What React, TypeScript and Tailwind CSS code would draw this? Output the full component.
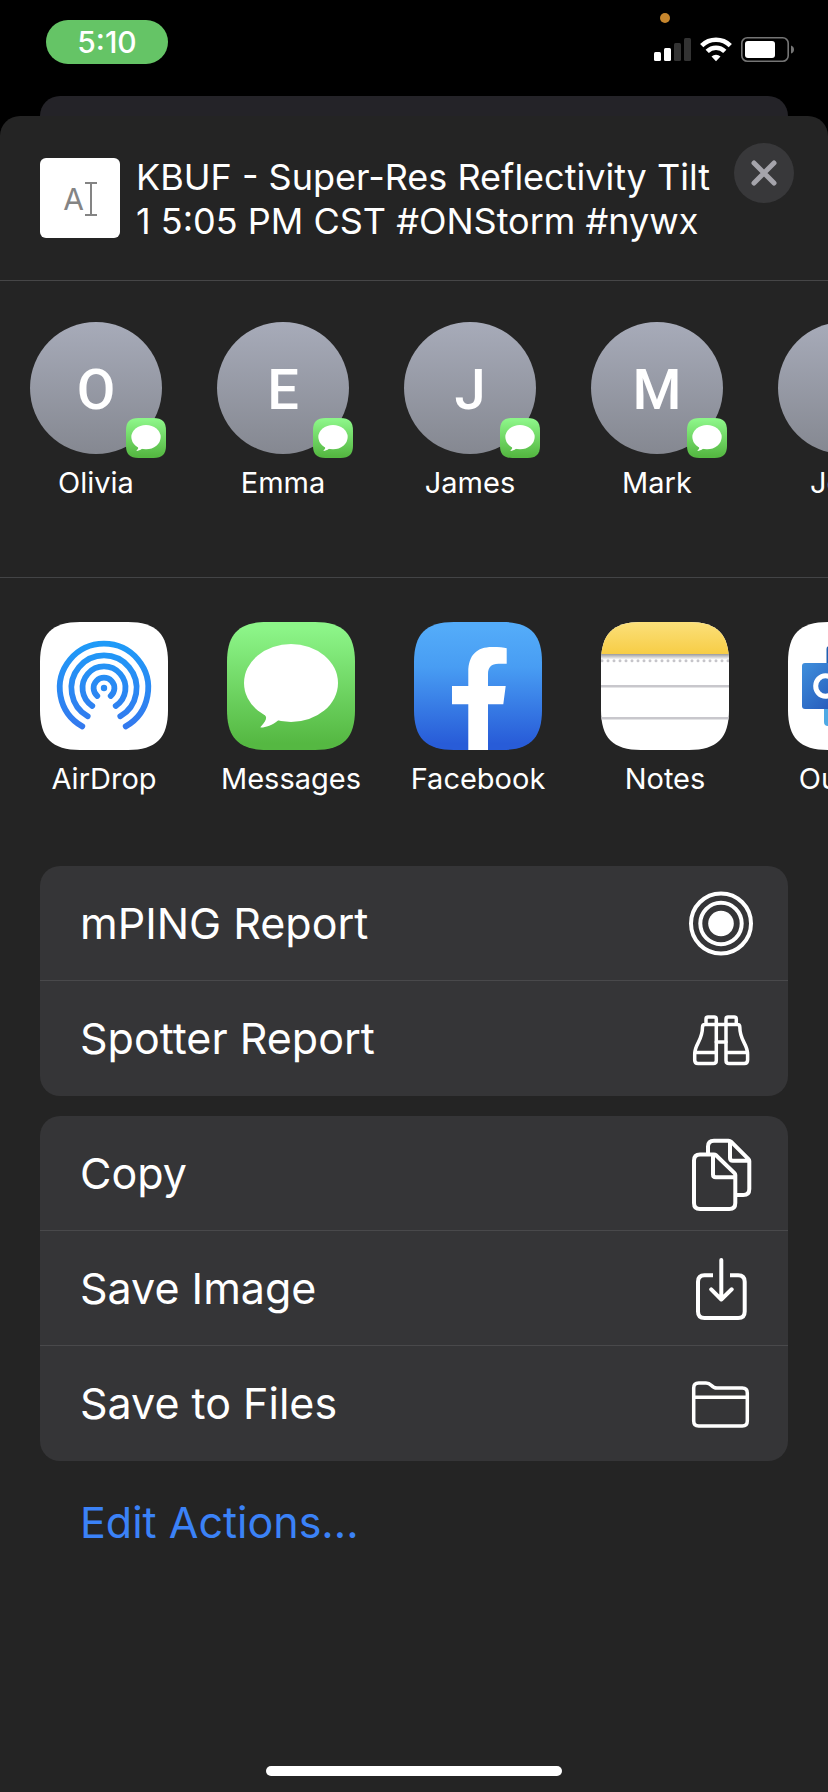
import React, { useId } from "react";

const TILE =
  "M0 40C0 12 12 0 40 0H88C116 0 128 12 128 40V88C128 116 116 128 88 128H40C12 128 0 116 0 88Z";

function MessagesIcon({ className }: { className: string }) {
  const id = useId();
  return (
    <svg viewBox="0 0 128 128" className={className} aria-hidden="true">
      <defs>
        <linearGradient id={id} x1="0" y1="0" x2="0" y2="1">
          <stop offset="0.05" stopColor="#8cf588" />
          <stop offset="0.95" stopColor="#55b842" />
        </linearGradient>
      </defs>
      <path d={TILE} fill={`url(#${id})`} />
      <ellipse cx="64" cy="61" rx="47" ry="39" fill="#fff" />
      <path d="M32 88C41 94 41.500 96 33.500 105C33 107 45 104 51 98.500L60 92Z" fill="#fff" />
    </svg>
  );
}

function AirDropIcon() {
  return (
    <svg viewBox="0 0 128 128" className="size-32" aria-hidden="true">
      <defs>
        <linearGradient id="airdrop" gradientUnits="userSpaceOnUse" x1="0" y1="20" x2="0" y2="108">
          <stop offset="0" stopColor="#1e9bf8" />
          <stop offset="1" stopColor="#3478ee" />
        </linearGradient>
      </defs>
      <path d={TILE} fill="#fff" />
      <g fill="none" stroke="url(#airdrop)" strokeWidth="5.8" strokeLinecap="round">
        <path d="M42.300 104.400A44.200 44.200 0 1 1 85.700 104.400" />
        <path d="M47.700 94.300A32.600 32.600 0 1 1 80.300 94.300" />
        <path d="M52.300 84A21.500 21.500 0 1 1 75.700 84" />
        <path d="M57.300 74A10.400 10.400 0 1 1 70.700 74" />
      </g>
      <circle cx="64" cy="66" r="3.200" fill="#2a8af3" />
    </svg>
  );
}

function FacebookIcon() {
  return (
    <svg viewBox="0 0 128 128" className="size-32" aria-hidden="true">
      <defs>
        <linearGradient id="facebook" x1="0" y1="0" x2="0" y2="1">
          <stop offset="0.050" stopColor="#53abf9" />
          <stop offset="0.350" stopColor="#489df3" />
          <stop offset="0.950" stopColor="#285cd8" />
        </linearGradient>
      </defs>
      <path d={TILE} fill="url(#facebook)" />
      <path
        d="M54.300 128V82.300H38V64H54.300V50C54.300 33 63 25 78 25C85 25 90 25.500 92.700 26.200V41.700H84.500C77 41.700 74 45.500 74 52V64H91.700L89.300 82.300H74V128Z"
        fill="#fff"
      />
    </svg>
  );
}

function NotesIcon() {
  return (
    <svg viewBox="0 0 128 128" className="size-32" aria-hidden="true">
      <defs>
        <linearGradient id="notes-top" x1="0" y1="0" x2="0" y2="1">
          <stop offset="0" stopColor="#fbe07a" />
          <stop offset="1" stopColor="#f7cd46" />
        </linearGradient>
        <linearGradient id="notes-shade" x1="0" y1="0" x2="0" y2="1">
          <stop offset="0" stopColor="#9a9a9c" />
          <stop offset="1" stopColor="#ffffff" />
        </linearGradient>
        <clipPath id="notes-clip">
          <path d={TILE} />
        </clipPath>
      </defs>
      <g clipPath="url(#notes-clip)">
        <rect width="128" height="128" fill="#fff" />
        <rect width="128" height="32" fill="url(#notes-top)" />
        <rect y="32" width="128" height="5.500" fill="url(#notes-shade)" />
        <path d="M1 38.800H128" stroke="#c6c5ca" strokeWidth="3" strokeLinecap="round" strokeDasharray="0 6" />
        <path d="M0 64.300H128M0 96.300H128" stroke="#c8c7cc" strokeWidth="2.400" />
      </g>
    </svg>
  );
}

function OutlookIcon() {
  return (
    <svg viewBox="0 0 128 128" className="size-32" aria-hidden="true">
      <defs>
        <linearGradient id="outlook" x1="0" y1="0" x2="1" y2="1">
          <stop offset="0" stopColor="#3f8fdc" />
          <stop offset="1" stopColor="#2150b4" />
        </linearGradient>
      </defs>
      <path d={TILE} fill="#fff" />
      <rect x="38.500" y="24" width="66" height="50" rx="3" fill="#1f5fae" />
      <rect x="61" y="24" width="22" height="24" fill="#3a8ee0" />
      <path d="M36 62L75 84L114 62V100Q114 104 110 104H40Q36 104 36 100Z" fill="#4ea9e4" />
      <rect x="14" y="41" width="46" height="46" rx="3" fill="url(#outlook)" />
      <ellipse cx="37.500" cy="64" rx="9.800" ry="10.300" fill="none" stroke="#fff" strokeWidth="5" />
    </svg>
  );
}

function LineIcon({ width, children }: { width: number; children: React.ReactNode }) {
  return (
    <svg
      viewBox="0 -8 64 80"
      className="h-20 w-16 shrink-0"
      fill="none"
      stroke="#fff"
      strokeWidth={width}
      strokeLinecap="round"
      strokeLinejoin="round"
      aria-hidden="true"
    >
      {children}
    </svg>
  );
}

const binocularHalf =
  "M17 17.500V12Q17 10 19 10H25.300Q27.300 10 27.300 12V53.500Q27.300 56.500 24.300 56.500H9Q5.700 56.500 5.700 53V47C5.700 37 13.500 34 13.500 20Q13.500 17.500 16 17.500H27.300M5.700 45.500H27.300";

const icons = {
  target: (
    <LineIcon width={4}>
      <circle cx="32" cy="32.500" r="30" />
      <circle cx="32" cy="32.500" r="20.700" />
      <circle cx="32" cy="32.500" r="12.800" fill="#fff" stroke="none" />
    </LineIcon>
  ),
  binoculars: (
    <LineIcon width={3.5}>
      <path d={binocularHalf} />
      <path d={binocularHalf} transform="translate(64.300) scale(-1 1)" />
      <path d="M27.300 17.500H37M27.300 35H37" />
    </LineIcon>
  ),
  copy: (
    <LineIcon width={4}>
      <path d="M25 13.500H11Q5 13.500 5 19.500V62Q5 68 11 68H40.300Q46.300 68 46.300 62V34Q46.300 33 45.500 32.200L27 14.200Q26 13.500 25 13.500ZM24 14V33.500Q24 36.300 26.800 36.300H46" />
      <path d="M19 13V5.500Q19 -0.300 25 -0.300H39.500Q41 -0.300 42 0.700L59.500 18.200Q60.300 19 60.300 20V48Q60.300 54 54.300 54H47M41 0.500V17Q41 19.800 43.800 19.800H60" />
    </LineIcon>
  ),
  save: (
    <LineIcon width={4}>
      <path d="M24 19.300H15.500Q9 19.300 9 25.800V55.500Q9 62 15.500 62H49.200Q55.700 62 55.700 55.500V25.800Q55.700 19.300 49.200 19.300H41" strokeLinecap="butt" />
      <path d="M32.300 4V43.500M22.200 33.300L32.300 43.500L42.700 33.300" />
    </LineIcon>
  ),
  folder: (
    <LineIcon width={3.5}>
      <path d="M4.700 16Q4.700 11 9.700 11H17C20 11 21 12 22.500 13.500C24 15.200 25.500 16 28 16H53.300Q58.300 16 58.300 21V49Q58.300 54 53.300 54H9.700Q4.700 54 4.700 49ZM4.700 25.300H58.300" />
    </LineIcon>
  ),
};

const contacts = ["Olivia", "Emma", "James", "Mark", "John"];

const apps = [
  { name: "AirDrop", icon: <AirDropIcon /> },
  { name: "Messages", icon: <MessagesIcon className="size-32" /> },
  { name: "Facebook", icon: <FacebookIcon /> },
  { name: "Notes", icon: <NotesIcon /> },
  { name: "Outlook", icon: <OutlookIcon /> },
];

const actionGroups = [
  [
    { label: "mPING Report", icon: icons.target },
    { label: "Spotter Report", icon: icons.binoculars },
  ],
  [
    { label: "Copy", icon: icons.copy },
    { label: "Save Image", icon: icons.save },
    { label: "Save to Files", icon: icons.folder },
  ],
];

function StatusBar() {
  return (
    <header className="relative flex h-24 items-start justify-between pr-[34px] pl-[46px]">
      <div className="mt-5 flex h-11 w-[122px] items-center justify-center rounded-full bg-[#65c466] text-[30px] font-medium">
        5:10
      </div>
      <span className="absolute top-[13px] right-[158px] size-2.5 rounded-full bg-[#c6862d]" />
      <div className="mt-[37px] flex items-center gap-[9px]">
        <svg viewBox="0 0 37 25" className="h-[25px] w-[37px]" aria-hidden="true">
          <rect x="0" y="15" width="7" height="9" rx="1.500" fill="#fff" />
          <rect x="10" y="11" width="7" height="13" rx="1.500" fill="#fff" />
          <rect x="20" y="6" width="7" height="18" rx="1.500" fill="#333" />
          <rect x="30" y="1" width="7" height="23" rx="1.500" fill="#333" />
        </svg>
        <svg viewBox="0 0 32 25" className="h-[25px] w-8" aria-hidden="true">
          <g fill="none" stroke="#fff" strokeWidth="4.600">
            <path d="M1.700 8.600A20.500 20.500 0 0 1 30.300 8.600" />
            <path d="M7.200 14.300A12.500 12.500 0 0 1 24.800 14.300" />
          </g>
          <path d="M16 24.200L11.500 19.500A6.500 6.500 0 0 1 20.500 19.500Z" fill="#fff" />
        </svg>
        <svg viewBox="0 0 53 25" className="h-[25px] w-[53px]" aria-hidden="true">
          <rect x="0.800" y="0.800" width="46.400" height="23.400" rx="5.500" fill="none" stroke="#757575" strokeWidth="1.600" />
          <rect x="4" y="4" width="30" height="17" rx="3" fill="#fff" />
          <path d="M50 8.500Q53 9.500 53 12.500Q53 15.500 50 16.500Z" fill="#757575" />
        </svg>
      </div>
    </header>
  );
}

export default function App() {
  return (
    <div className="flex min-h-screen flex-col overflow-hidden bg-black font-[Inter,sans-serif] text-white">
      <StatusBar />
      <div className="mx-10 h-5 rounded-t-[20px] bg-[#242328]" />
      <main className="flex flex-1 flex-col rounded-t-[20px] bg-[#242424]">
        <div className="flex h-[165px] items-start border-b border-[#464647] pr-[34px] pl-10">
          <div className="mt-[42px] flex size-20 shrink-0 items-center justify-center gap-px rounded-md bg-white pt-0.5 text-[30px] text-[#848484]">
            <span>A</span>
            <svg viewBox="0 0 12 36" className="h-9 w-3" fill="none" stroke="#848484" strokeWidth="2" aria-hidden="true">
              <path d="M0 2H12M6 2V34M0 34H12" />
            </svg>
          </div>
          <h1 className="mt-[39px] ml-4 flex-1 text-[36px] leading-[44px]">
            KBUF - Super-Res Reflectivity Tilt
            <br />1 5:05 PM CST #ONStorm #nywx
          </h1>
          <button type="button" aria-label="Close" className="mt-[27px] flex size-[60px] shrink-0 items-center justify-center rounded-full bg-[#38383a]">
            <svg viewBox="0 0 26 26" className="size-[26px]" stroke="#a5a4ab" strokeWidth="5" strokeLinecap="round" aria-hidden="true">
              <path d="M3 3L23 23M23 3L3 23" />
            </svg>
          </button>
        </div>

        <ul className="flex h-[297px] gap-[55px] overflow-x-auto border-b border-[#434446] pt-[41px] pl-[30px] [scrollbar-width:none]">
          {contacts.map((name) => (
            <li key={name} className="w-[132px] shrink-0">
              <button type="button" className="flex w-full flex-col items-center">
                <span className="relative flex size-[132px] items-center justify-center rounded-full bg-linear-to-b from-[#a7abb9] to-[#858891] pt-1 font-[Roboto,sans-serif] text-[56px] leading-none font-medium">
                  <span aria-hidden="true">{name[0]}</span>
                  <MessagesIcon className="absolute -right-1 -bottom-1 size-10" />
                </span>
                <span className="mt-[11px] text-[29px] leading-9 whitespace-nowrap">{name}</span>
              </button>
            </li>
          ))}
        </ul>

        <ul className="flex h-[288px] gap-[59px] overflow-x-auto pt-11 pl-10 [scrollbar-width:none]">
          {apps.map((app) => (
            <li key={app.name} className="w-32 shrink-0">
              <button type="button" className="flex w-full flex-col items-center">
                {app.icon}
                <span className="mt-[11px] text-[29px] leading-9 whitespace-nowrap">{app.name}</span>
              </button>
            </li>
          ))}
        </ul>

        <div className="flex flex-col gap-5 px-10">
          {actionGroups.map((group) => (
            <ul key={group[0].label} className="overflow-hidden rounded-[20px] bg-[#353537]">
              {group.map((action) => (
                <li key={action.label} className="h-[115px] border-b border-[#49494b] last:border-b-0">
                  <button type="button" className="flex size-full items-center justify-between pr-[35px] pl-10 text-left text-[43px]">
                    {action.label}
                    {action.icon}
                  </button>
                </li>
              ))}
            </ul>
          ))}
        </div>

        <button type="button" className="mt-8 ml-20 self-start text-[43px] leading-[58px] text-[#3b82f7]">
          Edit Actions...
        </button>

        <div className="mt-auto flex justify-center pb-4">
          <div className="h-2.5 w-[296px] rounded-full bg-white" />
        </div>
      </main>
    </div>
  );
}
